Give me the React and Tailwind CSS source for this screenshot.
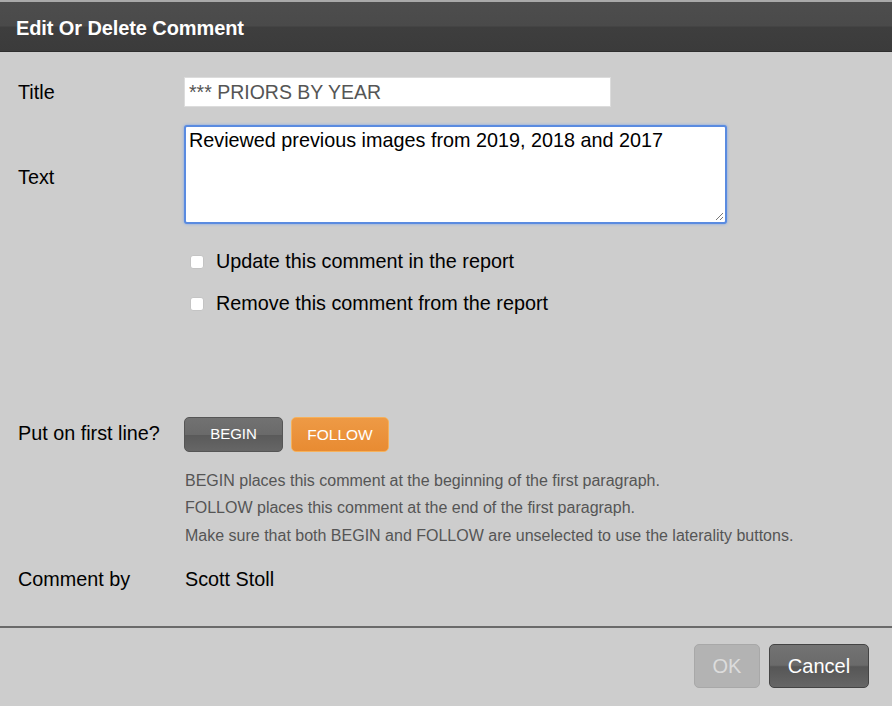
export default function App() {
  const font = { fontFamily: '"Liberation Sans", Arial, sans-serif' };
  return (
    <div style={font} className="w-[892px] h-[706px] bg-[#cdcdcd] flex flex-col overflow-hidden text-black">
      <div className="h-[52px] shrink-0 border-t-2 border-[#a9a9a9] bg-[linear-gradient(#4d4d4d_0%,#4a4a4a_48%,#3e3e3e_52%,#3b3b3b_100%)] flex items-center pl-4 pt-[2px] border-b border-b-[#2e2e2e]">
        <span className="text-white font-bold text-[20px] tracking-[-0.1px]">Edit Or Delete Comment</span>
      </div>

      <div className="flex-1 pl-[18px] pt-[25px]">
        <div className="grid grid-cols-[166px_1fr] items-center">
          <div className="text-[19.8px] pt-[1px]">Title</div>
          <div className="w-[427px] h-[30px] bg-white border border-[#dcdcdc] flex items-center pl-[4px] pt-[1px] text-[19.5px] text-[#555]">
            *** PRIORS BY YEAR
          </div>
        </div>

        <div className="grid grid-cols-[166px_1fr] items-center mt-[17px]">
          <div className="text-[19.8px] pt-[8px]">Text</div>
          <div className="relative w-[543px] h-[99px] bg-white border-2 border-[#5a8be0] rounded-[3px] shadow-[0_0_3px_#7aa5ee] pl-[3px] pt-[1px] text-[19.8px] leading-[24px]">
            Reviewed previous images from 2019, 2018 and 2017
            <svg className="absolute right-[1px] bottom-[1px]" width="10" height="10" viewBox="0 0 10 10">
              <path d="M2 9 L9 2 M6 9 L9 6" stroke="#777" strokeWidth="1" />
            </svg>
          </div>
        </div>

        <div className="ml-[172px] mt-[29px] flex flex-col gap-[24px]">
          <label className="flex items-center gap-[12px] text-[19.8px] h-[18px]">
            <span className="w-[14px] h-[14px] bg-white rounded-[3px] border border-[#c4c4c4]" />
            Update this comment in the report
          </label>
          <label className="flex items-center gap-[12px] text-[19.8px] h-[18px]">
            <span className="w-[14px] h-[14px] bg-white rounded-[3px] border border-[#c4c4c4]" />
            Remove this comment from the report
          </label>
        </div>

        <div className="grid grid-cols-[166px_1fr] items-center mt-[104px]">
          <div className="text-[19.8px]">Put on first line?</div>
          <div className="flex gap-[8px]">
            <button className="w-[99px] h-[35px] rounded-[5px] border border-[#555] bg-[linear-gradient(#727272_0%,#6a6a6a_50%,#5a5a5a_52%,#666_100%)] text-white text-[15px]">
              BEGIN
            </button>
            <button className="w-[98px] h-[35px] rounded-[5px] border border-[#f6b15b] bg-[linear-gradient(#ee9a45,#e88b32)] text-white text-[15.5px]">
              FOLLOW
            </button>
          </div>
        </div>

        <div className="ml-[167px] mt-[15px] text-[16px] text-[#555] leading-[27.5px]">
          <div>BEGIN places this comment at the beginning of the first paragraph.</div>
          <div>FOLLOW places this comment at the end of the first paragraph.</div>
          <div>Make sure that both BEGIN and FOLLOW are unselected to use the laterality buttons.</div>
        </div>

        <div className="grid grid-cols-[167px_1fr] items-center mt-[16px]">
          <div className="text-[19.8px]">Comment by</div>
          <div className="text-[19.8px]">Scott Stoll</div>
        </div>
      </div>

      <div className="h-[2px] bg-[#6a6a6a] shrink-0" />
      <div className="h-[78px] shrink-0 flex justify-end items-start pt-[16px] pr-[23px] gap-[9px]">
        <button className="w-[66px] h-[44px] rounded-[5px] bg-[#b3b3b3] border border-[#a8a8a8] text-[#dcdcdc] text-[20px]">
          OK
        </button>
        <button className="w-[100px] h-[44px] rounded-[5px] border border-[#444] bg-[linear-gradient(#737373_0%,#6a6a6a_48%,#565656_52%,#666_100%)] text-white text-[20px]">
          Cancel
        </button>
      </div>
    </div>
  );
}
